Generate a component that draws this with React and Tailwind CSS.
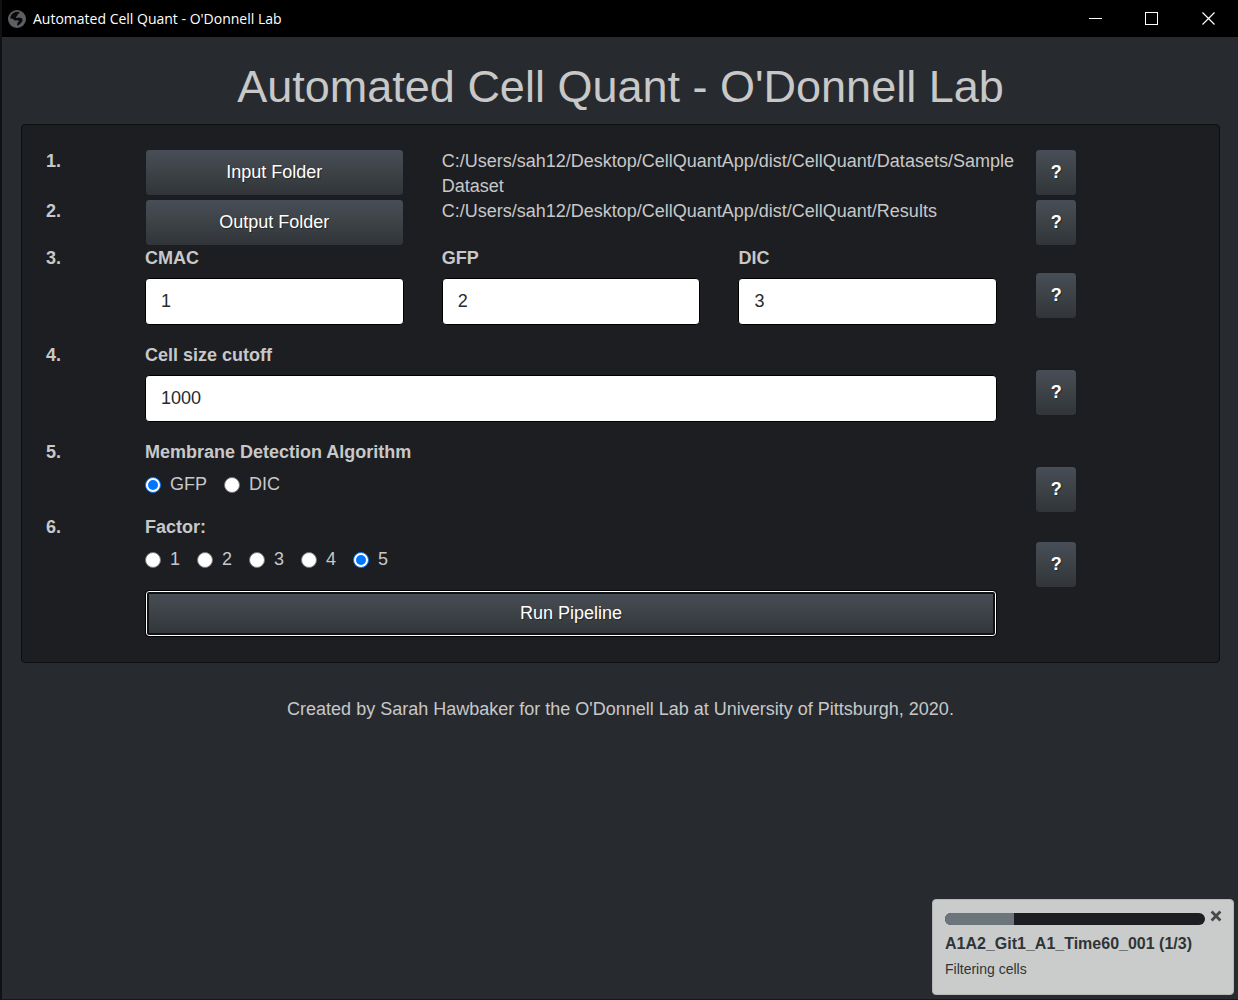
import { useState } from "react";

const buttonLook =
  "rounded border border-[#1b1d20] bg-linear-to-b from-[#484e57] via-[#3d4246] to-[#313539] text-white [text-shadow:1px_1px_1px_rgba(0,0,0,0.4)]";

function HelpButton({ topic, offset }) {
  return (
    <div className={`col-span-2 px-[19px] ${offset ? "pt-[26px]" : ""}`}>
      <button type="button" aria-label={`Help: ${topic}`} className={`h-[47px] w-[42px] font-bold ${buttonLook}`}>
        ?
      </button>
    </div>
  );
}

function StepNumber({ children }) {
  return <div className="px-[19px] font-bold">{children}</div>;
}

function FolderRow({ step, label, path, last }) {
  return (
    <div className="grid grid-cols-12">
      <StepNumber>{step}</StepNumber>
      <div className="col-span-3 px-[19px]">
        <button type="button" className={`h-[47px] w-full ${buttonLook}`}>
          {label}
        </button>
      </div>
      <div className={`col-span-6 pl-[19px] pr-2 ${last ? "h-[47px]" : "min-h-[50px]"}`}>{path}</div>
      <HelpButton topic={label} />
    </div>
  );
}

function NumberField({ id, label, value, span }) {
  const [text, setText] = useState(value);
  return (
    <div className={`${span} px-[19px] pb-[18px]`}>
      <label htmlFor={id} className="mb-[7px] block font-bold">
        {label}
      </label>
      <input
        id={id}
        type="text"
        value={text}
        onChange={(e) => setText(e.target.value)}
        className="block h-[47px] w-full rounded border border-black bg-white px-[15px] text-[#272b30]"
      />
    </div>
  );
}

function RadioRow({ step, name, label, options, initial }) {
  const [selected, setSelected] = useState(initial);
  return (
    <div className="grid h-[75px] grid-cols-12">
      <StepNumber>{step}</StepNumber>
      <fieldset className="col-span-9 px-[19px]">
        <legend className="mb-[7px] font-bold">{label}</legend>
        <div className="flex gap-[17px]">
          {options.map((option) => (
            <label key={option} className="flex items-center gap-[9px]">
              <input
                type="radio"
                name={name}
                value={option}
                checked={selected === option}
                onChange={() => setSelected(option)}
                className="grid size-4 appearance-none place-items-center rounded-full border border-[#767676] bg-white before:size-[10px] before:rounded-full checked:border-[#0075ff] checked:before:bg-[#0075ff]"
              />
              {option}
            </label>
          ))}
        </div>
      </fieldset>
      <HelpButton topic={label} offset />
    </div>
  );
}

function TitleBar() {
  return (
    <header className="flex h-[37px] items-center bg-black pl-[6px] text-white">
      <svg viewBox="0 0 18 18" className="size-[18px]" aria-hidden="true">
        <circle cx="9" cy="9" r="9" fill="#5c6064" />
        <path
          d="M8.6 1.8 11.4 2 11.2 3.6 9.4 4.4 9.6 5.8 7.8 7 8.4 8 11.4 7.6 14.2 8.6 14.6 11 12.6 13.4 10.4 15.4 9 15.2 9.6 12.6 11 11.2 9.6 10.2 6.8 10.4 4.6 8.8 2.4 8.4 C2.4 5 5 2.4 8.6 1.8Z"
          fill="#0b0b0c"
        />
      </svg>
      <span className="ml-[7px] grow font-['Open_Sans',sans-serif] text-[14px] leading-5">
        Automated Cell Quant - O'Donnell Lab
      </span>
      <button type="button" aria-label="Minimize" className="grid h-full w-14 place-items-center">
        <svg viewBox="0 0 13 13" className="size-[13px]" stroke="white" fill="none">
          <path d="M0 6.5H13" />
        </svg>
      </button>
      <button type="button" aria-label="Maximize" className="grid h-full w-14 place-items-center">
        <svg viewBox="0 0 13 13" className="size-[13px]" stroke="white" fill="none">
          <rect x="0.5" y="0.5" width="12" height="12" />
        </svg>
      </button>
      <button type="button" aria-label="Close" className="grid h-full w-[59px] place-items-center">
        <svg viewBox="0 0 13 13" className="size-[13px]" stroke="white" fill="none">
          <path d="M0.5 0.5 12.5 12.5M12.5 0.5 0.5 12.5" strokeWidth="1.2" />
        </svg>
      </button>
    </header>
  );
}

function Toast() {
  const progress = 69 / 260;
  return (
    <aside
      role="status"
      className="fixed right-1 bottom-[5px] w-[302px] rounded border border-[#b4b6b8] bg-[#cacccb] pt-[13px] pr-[11px] pb-[14px] pl-3 text-[#303436]"
    >
      <div className="flex items-start gap-[5px]">
        <div
          role="progressbar"
          aria-label="Pipeline progress"
          aria-valuenow={Math.round(progress * 100)}
          className="h-3 grow overflow-hidden rounded-md bg-[#1c1e22]"
        >
          <div className="h-full bg-[#6c757b]" style={{ width: `${progress * 100}%` }} />
        </div>
        <button type="button" aria-label="Dismiss" className="-mt-[3px] grid size-3 place-items-center">
          <svg viewBox="0 0 12 12" className="size-3" stroke="#45494b" strokeWidth="2.8" fill="none">
            <path d="M1.6 1.6 10.4 10.4M10.4 1.6 1.6 10.4" />
          </svg>
        </button>
      </div>
      <p className="mt-2 text-[16px] leading-[22px] font-bold">A1A2_Git1_A1_Time60_001 (1/3)</p>
      <p className="mt-1 text-[14px] leading-[21px]">Filtering cells</p>
    </aside>
  );
}

export default function App() {
  return (
    <div className="min-h-screen border-b border-l-2 border-b-[#16181a] border-l-[#0f1114] bg-[#272b30] font-['Liberation_Sans',Arial,sans-serif] text-[18px] leading-[25px] text-[#c8c8c8]">
      <TitleBar />
      <main className="pt-[22px] pr-[18px] pl-[19px]">
        <h1 className="mb-[9px] text-center text-[45px] leading-[56px]">Automated Cell Quant - O'Donnell Lab</h1>
        <form
          onSubmit={(e) => e.preventDefault()}
          className="rounded border border-[#0d0e10] bg-[#1c1e22] px-6 pt-6 pb-[25px]"
        >
          <div className="-mx-[19px]">
            <FolderRow
              step="1."
              label="Input Folder"
              path="C:/Users/sah12/Desktop/CellQuantApp/dist/CellQuant/Datasets/Sample Dataset"
            />
            <FolderRow
              step="2."
              label="Output Folder"
              path="C:/Users/sah12/Desktop/CellQuantApp/dist/CellQuant/Results"
              last
            />
            <div className="grid grid-cols-12">
              <StepNumber>3.</StepNumber>
              <NumberField id="cmac" label="CMAC" value="1" span="col-span-3" />
              <NumberField id="gfp" label="GFP" value="2" span="col-span-3" />
              <NumberField id="dic" label="DIC" value="3" span="col-span-3" />
              <HelpButton topic="Channels" offset />
            </div>
            <div className="grid grid-cols-12">
              <StepNumber>4.</StepNumber>
              <NumberField id="cutoff" label="Cell size cutoff" value="1000" span="col-span-9" />
              <HelpButton topic="Cell size cutoff" offset />
            </div>
            <RadioRow
              step="5."
              name="algorithm"
              label="Membrane Detection Algorithm"
              options={["GFP", "DIC"]}
              initial="GFP"
            />
            <RadioRow step="6." name="factor" label="Factor:" options={["1", "2", "3", "4", "5"]} initial="5" />
            <div className="grid grid-cols-12">
              <div className="col-span-9 col-start-2 px-[19px]">
                <button
                  type="submit"
                  className="h-[47px] w-full rounded border border-black bg-linear-to-b from-[#484e57] via-[#3d4246] to-[#313539] text-white shadow-[inset_0_0_0_1px_white,inset_0_0_0_3px_#101113] [text-shadow:1px_1px_1px_rgba(0,0,0,0.4)]"
                >
                  Run Pipeline
                </button>
              </div>
            </div>
          </div>
        </form>
        <footer className="py-[34px] text-center">
          Created by Sarah Hawbaker for the O'Donnell Lab at University of Pittsburgh, 2020.
        </footer>
      </main>
      <Toast />
    </div>
  );
}
